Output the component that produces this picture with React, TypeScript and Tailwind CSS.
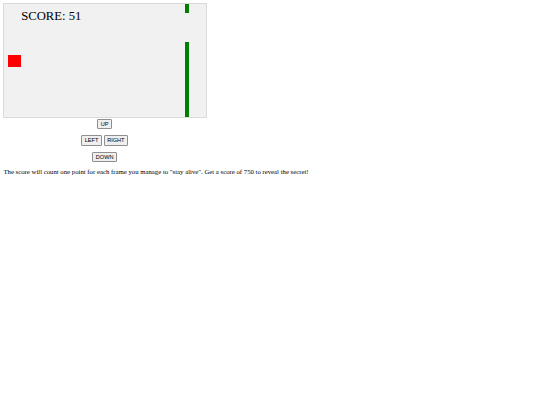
import React from 'react';

// whole page is a 1280px-wide layout shown at 540px, so everything is scaled by 0.4219
const buttonClass =
  'bg-[#efefef] border border-[#8f8f8f] rounded-[1px] px-[2.5px] py-[0.9px] text-[5.6px] leading-[6.5px] text-black font-["Liberation_Sans",Arial,sans-serif]';

export default function App() {
  const score = 51;

  return (
    <div className="pl-[3.4px] pt-[3.4px] bg-white min-h-[405px] font-['Liberation_Serif','Times_New_Roman',serif] text-black">
      <div className="relative box-content w-[202px] h-[113px] bg-[#f1f1f1] border border-[#dadada]">
        <div className="absolute left-[16.8px] top-[6px] text-[12.66px] leading-[12.66px] whitespace-nowrap">
          SCORE: {score}
        </div>
        <div className="absolute left-[3.6px] top-[50.2px] w-[12.66px] h-[12.66px] bg-[#ff0000]" />
        <div className="absolute left-[180.4px] top-0 w-[4.22px] h-[8.9px] bg-[#008000]" />
        <div className="absolute left-[180.4px] top-[37.6px] bottom-0 w-[4.22px] bg-[#008000]" />
      </div>

      <div className="w-[202.5px] mt-[0.4px] flex flex-col items-center gap-[6.4px]">
        <div className="flex gap-[1.7px]">
          <button className={buttonClass}>UP</button>
        </div>
        <div className="flex gap-[1.7px]">
          <button className={buttonClass}>LEFT</button>
          <button className={buttonClass}>RIGHT</button>
        </div>
        <div className="flex gap-[1.7px]">
          <button className={buttonClass}>DOWN</button>
        </div>
      </div>

      <p className="mt-[6px] text-[6.75px] leading-[7.8px] whitespace-nowrap">
        The score will count one point for each frame you manage to "stay alive". Get a score of 750 to reveal the secret!
      </p>
    </div>
  );
}
